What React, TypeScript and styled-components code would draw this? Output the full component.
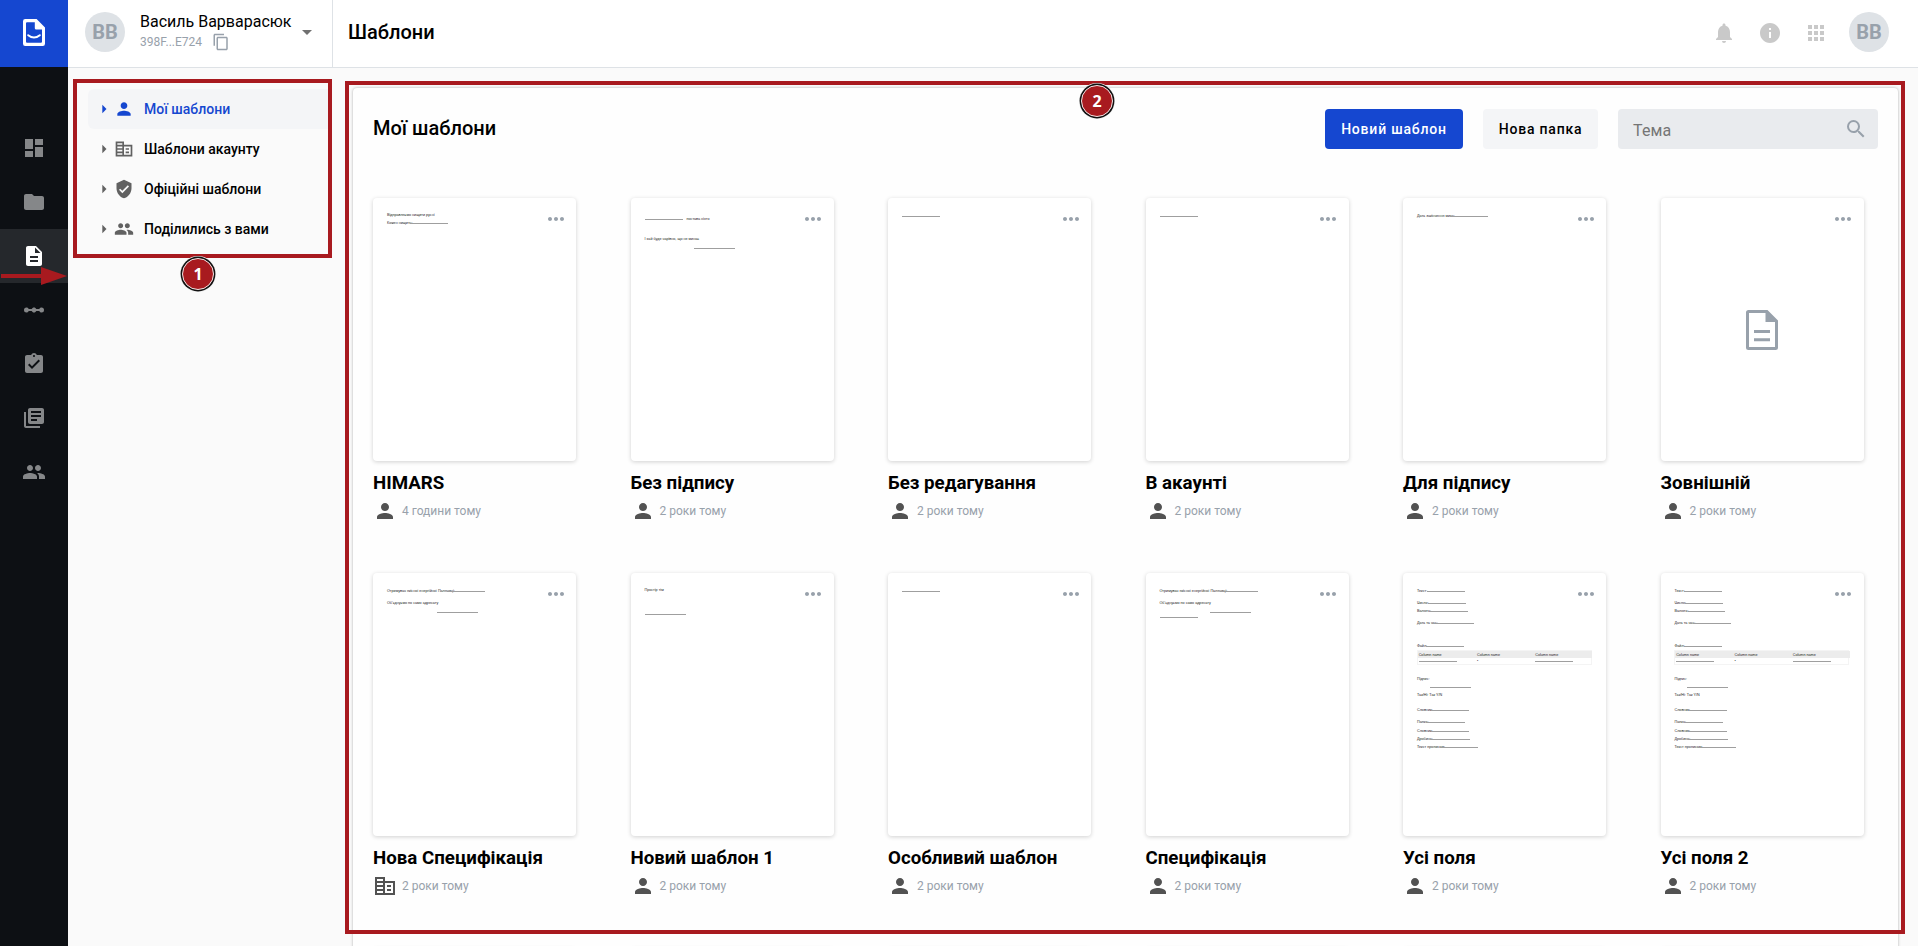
import React from "react";
import styled, { createGlobalStyle, css } from "styled-components";
import {
  MdApps,
  MdArrowDropDown,
  MdArrowRight,
  MdAssignmentTurnedIn,
  MdContentCopy,
  MdDashboard,
  MdDescription,
  MdFolder,
  MdInfo,
  MdLibraryBooks,
  MdLinearScale,
  MdMoreHoriz,
  MdNotifications,
  MdPeople,
  MdPerson,
  MdSearch,
  MdVerifiedUser,
} from "react-icons/md";

const color = {
  blue: "#1547d0",
  red: "#a81a1f",
  line: "#dee2e6",
  muted: "#98a1ab",
  page: "#fafafa",
};

const GlobalStyle = createGlobalStyle`
  * { box-sizing: border-box; }
  html, body { margin: 0; padding: 0; overflow: hidden; }
  body { font-family: Roboto, "Liberation Sans", sans-serif; color: #000; }
  button, input { font-family: inherit; }
  svg { display: block; flex-shrink: 0; }
`;

const Shell = styled.div`
  position: relative;
  display: flex;
  width: 1918px;
  height: 946px;
  overflow: hidden;
  background: ${color.page};
`;

/* ---------- navigation rail ---------- */

const Rail = styled.nav`
  display: flex;
  flex-direction: column;
  width: 68px;
  flex-shrink: 0;
  background: #0d1014;
`;

const Logo = styled.div`
  display: flex;
  align-items: center;
  justify-content: center;
  height: 67px;
  padding-right: 1px;
  padding-bottom: 2px;
  margin-bottom: 54px;
  background: ${color.blue};
`;

const RailItem = styled.a<{ $active?: boolean }>`
  display: flex;
  align-items: center;
  justify-content: center;
  height: 54px;
  color: ${(p) => (p.$active ? "#fff" : "#858789")};
  background: ${(p) => (p.$active ? "#25282c" : "transparent")};
`;

/* ---------- header ---------- */

const Main = styled.div`
  display: flex;
  flex-direction: column;
  flex: 1;
  min-width: 0;
`;

const Header = styled.header`
  display: flex;
  height: 68px;
  flex-shrink: 0;
  background: #fff;
  border-bottom: 1px solid ${color.line};
`;

const Account = styled.div`
  display: flex;
  align-items: center;
  width: 265px;
  padding: 0 13px 3px 17px;
  border-right: 1px solid ${color.line};
  svg:last-child { color: #707070; }
`;

const Avatar = styled.div`
  display: flex;
  align-items: center;
  justify-content: center;
  width: 40px;
  height: 40px;
  flex-shrink: 0;
  border-radius: 50%;
  background: ${color.line};
  color: ${color.muted};
  font-size: 20px;
  font-weight: 700;
`;

const AccountInfo = styled.div`
  display: flex;
  flex-direction: column;
  width: 155px;
  margin-left: 15px;
`;

const AccountName = styled.div`
  font-size: 16px;
  line-height: 20px;
  white-space: nowrap;
`;

const AccountId = styled.div`
  display: flex;
  align-items: center;
  gap: 10px;
  height: 20px;
  font-size: 12px;
  color: ${color.muted};
  svg { color: ${color.muted} !important; }
`;

const PageTitle = styled.h1`
  flex: 1;
  margin: 0;
  padding: 20px 0 0 15px;
  font-size: 20px;
  line-height: 24px;
  font-weight: 500;
`;

const HeaderTools = styled.div`
  display: flex;
  align-items: center;
  gap: 22px;
  padding: 0 29px 3px 0;
  color: #c9c9c9;
  > svg { margin-top: 2px; }
  ${Avatar} { margin-left: -1px; }
`;

/* ---------- body ---------- */

const Body = styled.div`
  display: flex;
  flex: 1;
  min-height: 0;
`;

const Tree = styled.aside`
  display: flex;
  flex-direction: column;
  width: 265px;
  flex-shrink: 0;
  padding: 21px 1px 0 20px;
`;

const TreeRow = styled.div<{ $active?: boolean }>`
  display: flex;
  align-items: center;
  height: 40px;
  padding-left: 6px;
  border-radius: 6px 0 0 6px;
  font-size: 14px;
  font-weight: 500;
  color: #000;
  svg { color: #616161; }
  span { margin-left: 10px; }
  ${(p) =>
    p.$active &&
    css`
      color: ${color.blue};
      background: #f4f5f7;
      svg { color: ${color.blue}; }
    `}
`;

const Panel = styled.main`
  width: 1545px;
  height: 940px;
  margin: 20px 0 0 20px;
  padding: 21px 20px 0;
  border-radius: 4px;
  background: #fefefe;
  box-shadow: 0 0 3px rgba(0, 0, 0, 0.3);
`;

const PanelBar = styled.div`
  display: flex;
  align-items: center;
  height: 40px;
`;

const PanelTitle = styled.h2`
  flex: 1;
  margin: 0;
  padding-bottom: 2px;
  font-size: 20px;
  line-height: 24px;
  font-weight: 500;
`;

const Button = styled.button<{ $primary?: boolean; $width: number }>`
  width: ${(p) => p.$width}px;
  height: 40px;
  margin-right: 20px;
  padding: 0;
  border: 0;
  border-radius: 4px;
  font-size: 14px;
  font-weight: 500;
  letter-spacing: 0.8px;
  color: ${(p) => (p.$primary ? "#fff" : "#000")};
  background: ${(p) => (p.$primary ? color.blue : "#f4f5f7")};
`;

const SearchField = styled.div`
  display: flex;
  align-items: center;
  justify-content: space-between;
  width: 260px;
  height: 40px;
  padding: 0 10px 0 15px;
  border-radius: 4px;
  background: #e9ebee;
  color: #757575;
  font-size: 16px;
  letter-spacing: 0.15px;
  span { padding-top: 2px; }
  svg { color: ${color.muted}; }
`;

const CardGrid = styled.div`
  display: grid;
  grid-template-columns: repeat(6, 203px);
  grid-auto-rows: 375px;
  column-gap: 54.5px;
  margin-top: 49px;
`;

const Card = styled.article`
  display: flex;
  flex-direction: column;
`;

const Preview = styled.div`
  position: relative;
  display: flex;
  flex-direction: column;
  height: 263px;
  flex-shrink: 0;
  border-radius: 4px;
  background: #fff;
  box-shadow: 0 1px 4px rgba(0, 0, 0, 0.18);
`;

const MenuDots = styled.div`
  position: absolute;
  top: 9px;
  right: 8.4px;
  color: ${color.muted};
`;

const EmptyDocument = styled.div`
  display: flex;
  flex: 1;
  align-items: center;
  justify-content: center;
`;

const CardTitle = styled.h3`
  margin: 8px 0 0;
  font-size: 18.72px;
  line-height: 28px;
  font-weight: 700;
  white-space: nowrap;
`;

const CardMeta = styled.div`
  display: flex;
  align-items: center;
  gap: 5px;
  height: 24px;
  margin-top: 2px;
  font-size: 12px;
  color: ${color.muted};
  svg { color: #525252; }
`;

/* ---------- miniature documents ---------- */

const DocLine = styled.div<{ $gap: number; $indent: number }>`
  display: flex;
  align-items: center;
  height: 4px;
  flex-shrink: 0;
  margin-top: ${(p) => p.$gap}px;
  padding-left: ${(p) => p.$indent}px;
`;

const DocText = styled.span<{ $width: number }>`
  width: ${(p) => p.$width}px;
  font-family: "Liberation Sans", sans-serif;
  font-size: 3.7px;
  line-height: 4px;
  color: #222;
  white-space: nowrap;
`;

const DocBlank = styled.span<{ $width: number }>`
  width: ${(p) => p.$width}px;
  height: 1px;
  margin-top: 1px;
  background: #9f9f9f;
`;

const DocTable = styled.div`
  display: grid;
  grid-template-columns: repeat(3, 58.3px);
  width: 175px;
  margin: 2.5px 0 0 13.5px;
  border: 0.5px solid #f4f4f4;
`;

const DocCell = styled.div<{ $head?: boolean }>`
  display: flex;
  align-items: center;
  height: ${(p) => (p.$head ? 6.5 : 6)}px;
  padding-left: 1.2px;
  background: ${(p) => (p.$head ? "#ececec" : "transparent")};
`;

/* ---------- callouts over the page ---------- */

const Highlight = styled.div<{ $x: number; $y: number; $w: number; $h: number }>`
  position: absolute;
  left: ${(p) => p.$x}px;
  top: ${(p) => p.$y}px;
  width: ${(p) => p.$w}px;
  height: ${(p) => p.$h}px;
  border: 4px solid ${color.red};
`;

const Marker = styled.div<{ $x: number; $y: number }>`
  position: absolute;
  left: ${(p) => p.$x}px;
  top: ${(p) => p.$y}px;
  display: flex;
  align-items: center;
  justify-content: center;
  width: 32px;
  height: 32px;
  border-radius: 50%;
  border: 1px solid #f3e6e6;
  box-shadow: 0 0 0 1.4px #111, 0 0 0 2px #eee;
  background: ${color.red};
  color: #fff;
  font-family: "Open Sans", sans-serif;
  font-size: 16px;
  font-weight: 700;
`;

const Arrow = styled.svg`
  position: absolute;
  left: 0;
  top: 266px;
`;

type Line = { y: number; x?: number; text?: string; w?: number; blank?: number };
type Doc = { lines: Line[]; table?: boolean; tail?: Line[] };

const blank = (y: number, x = 14, width = 38): Line => ({ y, x, blank: width });

const specification: Line[] = [
  { y: 18, text: "Отримувач якісної енергійної Паляниці:", w: 60, blank: 38 },
  { y: 30, text: "Об'єднуємо по само адресату", w: 50 },
  blank(39, 64, 41),
];

const allFields: Doc = {
  lines: [
    { y: 18, text: "Текст:", w: 9.7, blank: 38 },
    { y: 30, text: "Число:", w: 10.7, blank: 38 },
    { y: 38.3, text: "Валюта:", w: 13.3, blank: 37.5 },
    { y: 50.3, text: "Дата та час:", w: 18, blank: 38.5 },
    { y: 73, text: "Файл:", w: 9.3, blank: 38 },
  ],
  table: true,
  tail: [
    { y: 105, text: "Підпис:", w: 12 },
    blank(113.4, 26.7, 41),
    { y: 120.7, text: "Так/Ні: Так Y/N", w: 22 },
    { y: 136.3, text: "Словник:", w: 14.3, blank: 38 },
    { y: 148.3, text: "Папка:", w: 10, blank: 38 },
    { y: 156.7, text: "Словник:", w: 14.3, blank: 38 },
    { y: 165, text: "Дробина:", w: 14.3, blank: 39 },
    { y: 173.3, text: "Текст прописом:", w: 23.3, blank: 38 },
  ],
};

type Template = { name: string; time: string; shared?: boolean; doc?: Doc };

const years = "2 роки тому";

const templates: Template[] = [
  {
    name: "HIMARS",
    time: "4 години тому",
    doc: {
      lines: [
        { y: 16.6, text: "Відправляємо нищити русні", w: 42 },
        { y: 25, text: "Кожен нищить:", w: 22.5, blank: 38 },
      ],
    },
  },
  {
    name: "Без підпису",
    time: years,
    doc: {
      lines: [
        { y: 21, blank: 38, text: "постава ніхто", w: -1 },
        { y: 41, text: "І хай буде чарівно, що не минає", w: 48 },
        blank(50, 63, 41),
      ],
    },
  },
  { name: "Без редагування", time: years, doc: { lines: [blank(18)] } },
  { name: "В акаунті", time: years, doc: { lines: [blank(18)] } },
  {
    name: "Для підпису",
    time: years,
    doc: { lines: [{ y: 18, text: "Дата закінчення мита:", w: 33, blank: 38 }] },
  },
  { name: "Зовнішній", time: years },
  { name: "Нова Специфікація", time: years, shared: true, doc: { lines: specification } },
  {
    name: "Новий шаблон 1",
    time: years,
    doc: { lines: [{ y: 16.6, text: "Простір тім", w: 16 }, blank(41, 14, 41)] },
  },
  { name: "Особливий шаблон", time: years, doc: { lines: [blank(18)] } },
  { name: "Специфікація", time: years, doc: { lines: [...specification, blank(44)] } },
  { name: "Усі поля", time: years, doc: allFields },
  { name: "Усі поля 2", time: years, doc: allFields },
];

function DocLines({ lines, start }: { lines: Line[]; start: number }) {
  return (
    <>
      {lines.map((line, i) => {
        const previousEnd = i === 0 ? start : lines[i - 1].y + 2;
        const trailing = line.w === -1;
        const text = line.text && <DocText $width={trailing ? 20 : line.w ?? 20}>{line.text}</DocText>;
        return (
          <DocLine key={line.y} $gap={line.y - 2 - previousEnd} $indent={line.x ?? 14}>
            {!trailing && text}
            {line.blank && <DocBlank $width={line.blank} />}
            {trailing && <DocLine $gap={0} $indent={4}>{text}</DocLine>}
          </DocLine>
        );
      })}
    </>
  );
}

function Miniature({ doc }: { doc: Doc }) {
  return (
    <>
      <DocLines lines={doc.lines} start={0} />
      {doc.table && (
        <DocTable>
          {[0, 1, 2].map((i) => (
            <DocCell key={i} $head>
              <DocText $width={50}>Column name</DocText>
            </DocCell>
          ))}
          <DocCell><DocBlank $width={38} /></DocCell>
          <DocCell><DocText $width={4}>•</DocText></DocCell>
          <DocCell><DocBlank $width={38} /></DocCell>
        </DocTable>
      )}
      {doc.tail && <DocLines lines={doc.tail} start={91} />}
    </>
  );
}

const LogoMark = () => (
  <svg width="22" height="27" viewBox="0 0 22 27">
    <path
      fill="#fff"
      fillRule="evenodd"
      d="M2.2 0H13.6L22 8.4V24.8A2.2 2.2 0 0 1 19.8 27H2.2A2.2 2.2 0 0 1 0 24.8V2.2A2.2 2.2 0 0 1 2.2 0ZM4 3.2Q3 3.2 3 4.2V22.8Q3 23.8 4 23.8H18Q19 23.8 19 22.8V10.6H13.2Q11.8 10.6 11.8 9.2V3.2Z"
    />
    <path fill="none" stroke="#fff" strokeWidth="2" strokeLinecap="round" d="M5.2 16.2Q11 20.8 16.8 16.2" />
  </svg>
);

const OfficeIcon = ({ size }: { size: number }) => (
  <svg width={size} height={size} viewBox="0 0 24 24" fill="currentColor">
    <path d="M12 7V3H2v18h20V7H12zm-2 12H4v-2h6v2zm0-4H4v-2h6v2zm0-4H4V9h6v2zm0-4H4V5h6v2zm10 12h-8V9h8v10zm-2-8h-4v2h4v-2zm0 4h-4v2h4v-2z" />
  </svg>
);

const DocumentIcon = () => (
  <svg width="32" height="40" viewBox="0 0 32 40" fill={color.muted}>
    <path
      fillRule="evenodd"
      d="M2.5 0H21.5L32 10.5V37.5A2.5 2.5 0 0 1 29.5 40H2.5A2.5 2.5 0 0 1 0 37.5V2.5A2.5 2.5 0 0 1 2.5 0ZM3 3V37H29V12H19.5V3Z"
    />
    <path d="M8 20H24V23H8ZM8 28.3H24V31.3H8Z" />
  </svg>
);

const railIcons = [
  MdDashboard,
  MdFolder,
  MdDescription,
  MdLinearScale,
  MdAssignmentTurnedIn,
  MdLibraryBooks,
  MdPeople,
];

const treeRows = [
  { label: "Мої шаблони", Icon: MdPerson },
  { label: "Шаблони акаунту", Icon: OfficeIcon },
  { label: "Офіційні шаблони", Icon: MdVerifiedUser },
  { label: "Поділились з вами", Icon: MdPeople },
];

export default function App() {
  return (
    <>
      <GlobalStyle />
      <Shell>
        <Rail>
          <Logo><LogoMark /></Logo>
          {railIcons.map((Icon, i) => (
            <RailItem key={i} $active={i === 2}><Icon size={24} /></RailItem>
          ))}
        </Rail>
        <Main>
          <Header>
            <Account>
              <Avatar>ВВ</Avatar>
              <AccountInfo>
                <AccountName>Василь Варварасюк</AccountName>
                <AccountId>
                  398F...E724
                  <MdContentCopy size={18} />
                </AccountId>
              </AccountInfo>
              <MdArrowDropDown size={24} />
            </Account>
            <PageTitle>Шаблони</PageTitle>
            <HeaderTools>
              <MdNotifications size={24} />
              <MdInfo size={24} />
              <MdApps size={24} />
              <Avatar>ВВ</Avatar>
            </HeaderTools>
          </Header>
          <Body>
            <Tree>
              {treeRows.map(({ label, Icon }, i) => (
                <TreeRow key={label} $active={i === 0}>
                  <MdArrowRight size={20} />
                  <Icon size={20} />
                  <span>{label}</span>
                </TreeRow>
              ))}
            </Tree>
            <Panel>
              <PanelBar>
                <PanelTitle>Мої шаблони</PanelTitle>
                <Button $primary $width={138}>Новий шаблон</Button>
                <Button $width={115}>Нова папка</Button>
                <SearchField>
                  <span>Тема</span>
                  <MdSearch size={24} />
                </SearchField>
              </PanelBar>
              <CardGrid>
                {templates.map((t) => (
                  <Card key={t.name}>
                    <Preview>
                      {t.doc ? <Miniature doc={t.doc} /> : <EmptyDocument><DocumentIcon /></EmptyDocument>}
                      <MenuDots><MdMoreHoriz size={24} /></MenuDots>
                    </Preview>
                    <CardTitle>{t.name}</CardTitle>
                    <CardMeta>
                      {t.shared ? <OfficeIcon size={24} /> : <MdPerson size={24} />}
                      {t.time}
                    </CardMeta>
                  </Card>
                ))}
                {[0, 1, 2, 3, 4, 5].map((i) => (
                  <Card key={i}><Preview /></Card>
                ))}
              </CardGrid>
            </Panel>
          </Body>
        </Main>
        <Highlight $x={73} $y={79} $w={259} $h={179} />
        <Highlight $x={345} $y={81} $w={1560} $h={853} />
        <Marker $x={182} $y={258}>1</Marker>
        <Marker $x={1081} $y={85}>2</Marker>
        <Arrow width="68" height="20" viewBox="0 0 68 20" fill={color.red}>
          <path d="M1 8H41V1L67 10L41 19V12H1Z" />
        </Arrow>
      </Shell>
    </>
  );
}
